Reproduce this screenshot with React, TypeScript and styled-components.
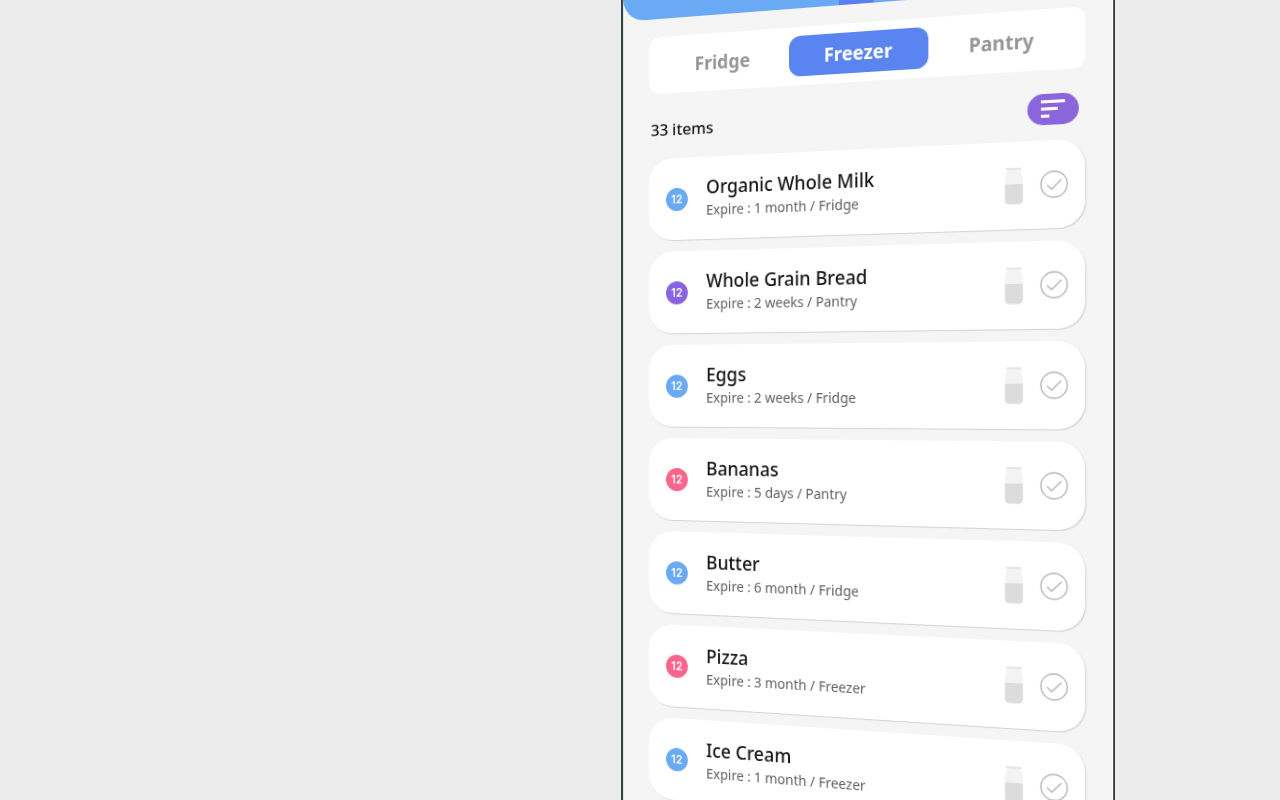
import React, { useState } from "react";
import styled, { createGlobalStyle } from "styled-components";

const GlobalStyle = createGlobalStyle`
  *, *::before, *::after { box-sizing: border-box; }
  body {
    margin: 0;
    overflow: hidden;
    background: #ececec;
    font-family: "Noto Sans", "Open Sans", sans-serif;
    color: #151515;
  }
  button { font-family: inherit; border: 0; padding: 0; cursor: pointer; }
`;

const Stage = styled.main`
  display: flex;
  justify-content: flex-end;
  height: 100vh;
  overflow: hidden;
  padding-right: 171px;
  background: #ececec;
`;

/* The phone screen, turned slightly so that its right side faces the viewer. */
const Phone = styled.section`
  flex: none;
  display: flex;
  flex-direction: column;
  width: 506px;
  height: calc(100vh + 100px);
  margin-top: -48px;
  background: #f5f5f5;
  border: solid #384444;
  border-width: 0 2px;
  box-shadow: inset -1px 0 0 #ffffff;
  transform-origin: 265px 440px;
  transform: perspective(1080px) rotateY(-12deg);
`;

const Header = styled.header`
  flex: none;
  display: flex;
  justify-content: center;
  height: 51px;
  background: #6aaaf5;
  border-radius: 0 0 24px 24px;
`;

const HeaderMark = styled.span`
  width: 36px;
  background: #5980ee;
`;

const Content = styled.div`
  display: flex;
  flex-direction: column;
  padding: 19px 26px 0 29px;
`;

const Tabs = styled.div`
  display: flex;
  height: 59px;
  padding: 9px;
  background: #ffffff;
  border-radius: 12px;
`;

const Tab = styled.button<{ $active: boolean }>`
  flex: 1 1 0;
  border-radius: 12px;
  background: ${(p) => (p.$active ? "#5a84f0" : "transparent")};
  color: ${(p) => (p.$active ? "#ffffff" : "#969696")};
  font-size: 19px;
  line-height: 24px;
  font-weight: 700;
`;

const Summary = styled.div`
  display: flex;
  align-items: center;
  justify-content: space-between;
  height: 68px;
  padding: 7px 6px 0 2px;
`;

const Count = styled.h2`
  margin: 0;
  font-size: 17px;
  line-height: 24px;
  font-weight: 500;
`;

const FilterButton = styled.button`
  display: flex;
  flex-direction: column;
  justify-content: center;
  gap: 4px;
  width: 49px;
  height: 30px;
  padding-left: 13px;
  border-radius: 15px;
  background: #8a65dc;
`;

const FilterBar = styled.span<{ $width: number }>`
  width: ${(p) => p.$width}px;
  height: 3px;
  background: #ffffff;
`;

const List = styled.ul`
  display: flex;
  flex-direction: column;
  gap: 12px;
  margin: 0;
  padding: 0;
  list-style: none;
`;

const Card = styled.li`
  display: flex;
  align-items: center;
  height: 85px;
  padding: 0 16px 0 19px;
  background: #ffffff;
  border-radius: 26px;
  box-shadow: 1px 1px 1px rgba(0, 0, 0, 0.14);
`;

const Badge = styled.span<{ $color: string }>`
  flex: none;
  width: 24px;
  height: 24px;
  margin-right: 20px;
  border-radius: 50%;
  background: ${(p) => p.$color};
  color: #ffffff;
  font-family: Inter, sans-serif;
  font-size: 12px;
  line-height: 24px;
  font-weight: 600;
  text-align: center;
`;

const Details = styled.div`
  flex: 1;
  min-width: 0;
`;

const Name = styled.h3`
  margin: 0;
  font-size: 19px;
  line-height: 24px;
  font-weight: 500;
`;

const Expiry = styled.p`
  margin: 0;
  font-size: 14px;
  line-height: 24px;
  color: #606060;
`;

const CheckButton = styled.button`
  flex: none;
  width: 27px;
  height: 27px;
  margin-left: 16px;
  background: transparent;
  svg { display: block; }
`;

const Bottle = () => (
  <svg width="18" height="36" viewBox="0 0 18 36" aria-hidden="true">
    <path d="M2.5 2H15.5L17.6 10V31Q17.6 35.5 13.5 35.5H4.5Q.4 35.5 .4 31V10Z" fill="#f3f3f3" />
    <path d="M.4 16H17.6V31Q17.6 35.5 13.5 35.5H4.5Q.4 35.5 .4 31Z" fill="#dcdcdc" />
    <path d="M1.5 1H16.5" stroke="#dadada" strokeWidth="1.4" />
  </svg>
);

const CheckMark = () => (
  <svg width="27" height="27" viewBox="0 0 28 28" fill="none" stroke="#b8b8b8" aria-hidden="true">
    <circle cx="14" cy="14" r="13" strokeWidth="1.4" />
    <path d="M7.5 15L11.6 18.9L21 9.7" strokeWidth="1.4" strokeLinecap="round" strokeLinejoin="round" />
  </svg>
);

const BLUE = "#6aa9f4";
const PURPLE = "#8863e2";
const PINK = "#fb648b";

const items = [
  { name: "Organic Whole Milk", expiry: "1 month / Fridge", color: BLUE },
  { name: "Whole Grain Bread", expiry: "2 weeks / Pantry", color: PURPLE },
  { name: "Eggs", expiry: "2 weeks / Fridge", color: BLUE },
  { name: "Bananas", expiry: "5 days / Pantry", color: PINK },
  { name: "Butter", expiry: "6 month / Fridge", color: BLUE },
  { name: "Pizza", expiry: "3 month / Freezer", color: PINK },
  { name: "Ice Cream", expiry: "1 month / Freezer", color: BLUE },
];

export default function App() {
  const [active, setActive] = useState("Freezer");
  return (
    <>
      <GlobalStyle />
      <Stage>
        <Phone>
          <Header>
            <HeaderMark />
          </Header>
          <Content>
            <Tabs role="tablist">
              {["Fridge", "Freezer", "Pantry"].map((place) => (
                <Tab
                  key={place}
                  role="tab"
                  aria-selected={active === place}
                  $active={active === place}
                  onClick={() => setActive(place)}
                >
                  {place}
                </Tab>
              ))}
            </Tabs>
            <Summary>
              <Count>33 items</Count>
              <FilterButton aria-label="Sort items">
                <FilterBar $width={23} />
                <FilterBar $width={16} />
                <FilterBar $width={8} />
              </FilterButton>
            </Summary>
            <List>
              {items.map((item) => (
                <Card key={item.name}>
                  <Badge $color={item.color}>12</Badge>
                  <Details>
                    <Name>{item.name}</Name>
                    <Expiry>Expire : {item.expiry}</Expiry>
                  </Details>
                  <Bottle />
                  <CheckButton aria-label={`Mark ${item.name} as used`}>
                    <CheckMark />
                  </CheckButton>
                </Card>
              ))}
            </List>
          </Content>
        </Phone>
      </Stage>
    </>
  );
}
